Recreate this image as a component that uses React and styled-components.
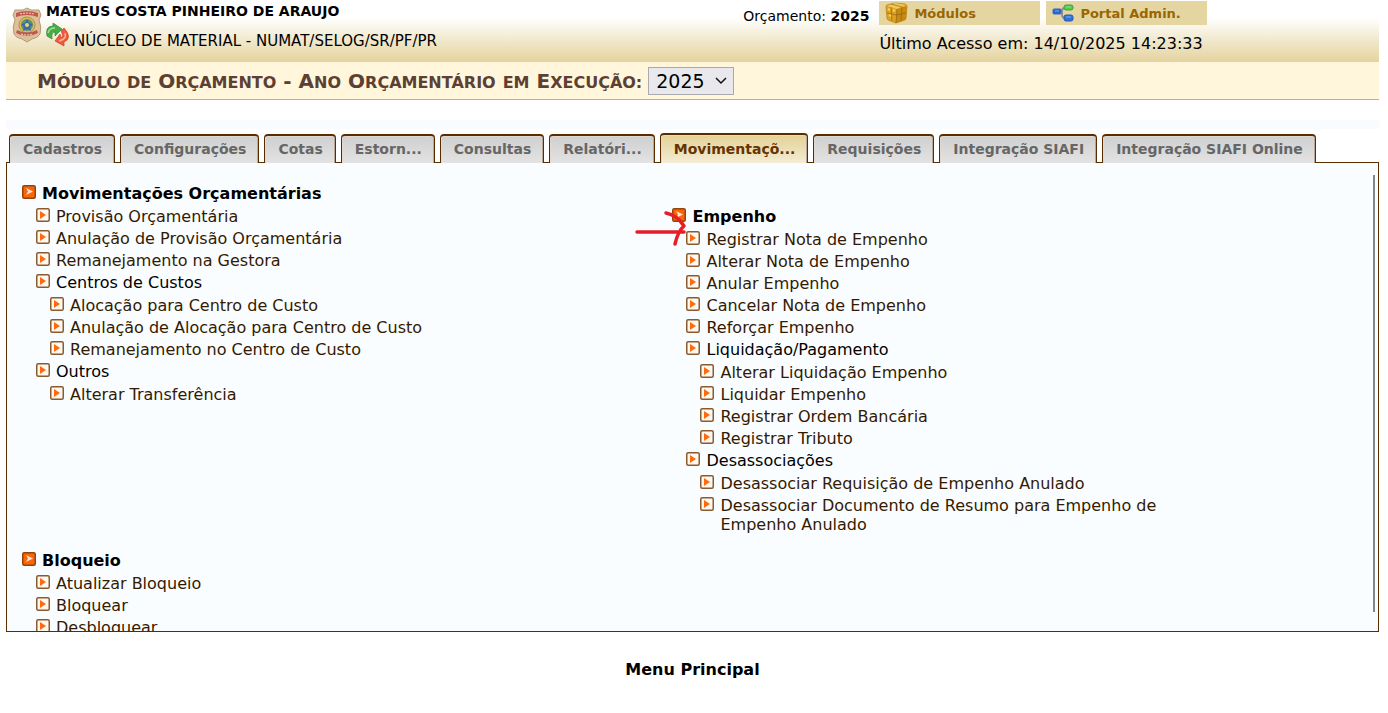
import React from "react";
import styled, { createGlobalStyle, css } from "styled-components";

const GlobalStyle = createGlobalStyle`
  * { box-sizing: border-box; }
  body {
    margin: 0;
    background: #fff;
    color: #000;
    font-family: "DejaVu Sans", Verdana, sans-serif;
    font-size: 16px;
    line-height: 19px;
  }
  ul { list-style: none; margin: 0; padding: 0; }
  a { text-decoration: none; color: inherit; }
`;

const Page = styled.div`
  padding: 0 9px 0 6px;
`;

const Header = styled.header`
  display: flex;
  justify-content: space-between;
  height: 62px;
  padding: 1px 12.5% 0 6px;
  background: linear-gradient(#fff 28%, #e4d39e);
`;

const UserArea = styled.div`
  display: flex;
  gap: 4px;
`;

const Crest = styled.svg`
  width: 30px;
  height: 36px;
  margin-top: 6px;
`;

const UserName = styled.strong`
  display: block;
  font-size: 14px;
  line-height: 20px;
`;

const Unit = styled.div`
  display: flex;
  align-items: flex-start;
  gap: 4px;
  font-size: 15px;
`;

const UnitName = styled.span`
  padding-top: 11px;
`;

const SwitchButton = styled.button`
  display: flex;
  padding: 2px 0 0;
  border: 0;
  background: none;
`;

const AccessArea = styled.div`
  display: grid;
  grid-template-columns: auto auto;
  column-gap: 10px;
  align-content: start;
`;

const Budget = styled.div`
  font-size: 14px;
  line-height: 30px;
`;

const Shortcuts = styled.nav`
  display: flex;
  gap: 6px;
`;

const Shortcut = styled.a`
  display: flex;
  align-items: center;
  gap: 6px;
  width: 161px;
  height: 24px;
  padding-left: 6px;
  background: #e4d5a1;
  color: #996600;
  font-size: 13px;
  font-weight: bold;
`;

const LastAccess = styled.div`
  grid-column: 2;
  line-height: 26px;
`;

const TitleBar = styled.div`
  display: flex;
  align-items: center;
  gap: 6px;
  height: 38px;
  padding-left: 31px;
  background: #fff6db;
  border-bottom: 1px solid #d1b44a;
`;

const Title = styled.label`
  padding-top: 2px;
  color: #5c4033;
  font-size: 16px;
  font-weight: bold;
  line-height: 24px;
  text-transform: uppercase;
`;

const Capital = styled.span`
  font-size: 20px;
`;

const YearField = styled.div`
  display: grid;
  align-items: center;
  svg {
    grid-area: 1 / 1;
    justify-self: end;
    margin-right: 7px;
    pointer-events: none;
  }
`;

const YearSelect = styled.select`
  grid-area: 1 / 1;
  appearance: none;
  width: 86px;
  height: 28px;
  padding: 0 7px;
  border: 1px solid #a9a9ae;
  border-radius: 0;
  background: #e9e9ed;
  color: #000;
  font-family: inherit;
  font-size: 19px;
`;

const Strip = styled.div`
  height: 9px;
  margin-top: 20px;
  background: #fafbff;
`;

const Tabs = styled.nav`
  position: relative;
  display: flex;
  align-items: flex-end;
  gap: 5px;
  padding: 4px 3px 0;
  margin-bottom: -1px;
`;

const Tab = styled.a`
  height: 29px;
  padding: 0 12px 0 13px;
  border: 1px solid #5a2d00;
  border-width: 2px 1px 0;
  border-radius: 4px 4px 0 0;
  background: linear-gradient(#cfcfcf, #e3e3e3);
  box-shadow: inset 1px 1px #e0d9d2, inset -1px 0 #b9a797;
  color: #666;
  font-size: 14px;
  font-weight: bold;
  line-height: 26px;
  white-space: nowrap;
  ${(p) =>
    p.$active &&
    css`
      height: 30px;
      line-height: 28px;
      background: linear-gradient(#e3d194, #f4ecd6);
      color: #663300;
    `}
`;

const Panel = styled.main`
  display: flex;
  height: calc(100vh - 243px);
  border: 1px solid #5a2d00;
  background: #fafdff;
  overflow: hidden;
`;

const MenuGrid = styled.div`
  flex: 1;
  display: grid;
  grid-template-columns: 48% 1fr;
  column-gap: 2px;
  align-content: start;
  row-gap: 14px;
  padding: 21px 0 0 15px;
`;

const Section = styled.section`
  position: relative;
  max-width: 500px;
  margin-top: ${(p) => (p.$lowered ? "23px" : "0")};
`;

const Row = styled.div`
  display: flex;
  align-items: flex-start;
  gap: 6px;
  padding-bottom: 3px;
  svg { flex: none; margin-top: 1px; }
`;

const SectionTitle = styled.h2`
  margin: 0;
  font-size: 16px;
  line-height: 19px;
`;

const List = styled.ul`
  && { padding: 1px 0 0 14px; }
`;

const MenuLink = styled.a`
  && { color: #331a00; }
`;

const ScrollThumb = styled.div`
  width: 2px;
  margin: 12px 3px 19px 0;
  background: #868686;
`;

const Footer = styled.footer`
  padding: 28px 0;
  text-align: center;
  font-weight: bold;
`;

const Arrow = styled.svg`
  position: absolute;
  left: -37px;
  top: 3px;
  pointer-events: none;
`;

const CrestIcon = () => (
  <Crest viewBox="0 0 30 36" aria-hidden="true">
    <path d="M15 1 19 3 27 3 29 8 27 13Q30 20 28 27 26 31 20 32L15 35 10 32Q4 31 2 27 0 20 3 13L1 8 3 3 11 3Z" fill="#dcc096" stroke="#b39a7c" />
    <path d="M4 6Q15 2 26 6L26 10Q15 6 4 10Z" fill="#c25650" />
    <circle cx="15" cy="18" r="8" fill="#d8bd55" stroke="#b09050" />
    <circle cx="15" cy="18" r="6" fill="#5f9468" />
    <path d="m15 12 2 4 4 1-3 3 1 4-4-2-4 2 1-4-3-3 4-1Z" fill="#3c68b0" />
    <circle cx="15" cy="18" r="2" fill="#d9dc70" />
    <path d="M4 26Q15 32 26 26L25 23Q15 28 5 23Z" fill="#bd5a50" />
    <path d="M8 7Q15 5 22 7M9 27Q15 29 21 27" fill="none" stroke="#eedccc" strokeDasharray="2 1" />
  </Crest>
);

const SwitchIcon = () => (
  <svg width="24" height="24" viewBox="0 0 24 24" aria-hidden="true">
    <path d="M1 13Q-1 3 7 3V0L16 6 9 13V9Q5 9 6 16Z" fill="#49ad45" stroke="#2d8735" strokeWidth=".7" />
    <path d="M2 10Q3 5 9 5" fill="none" stroke="#a4dda0" strokeWidth="1.500" />
    <path d="M18 5Q27 15 18 19V23L9 18 14 11 15 15Q18 13 15 8Z" fill="#f05a3c" stroke="#cf4028" strokeWidth=".7" />
    <path d="M19 10Q21 16 13 18" fill="none" stroke="#f9b29c" strokeWidth="1.500" />
  </svg>
);

const BoxIcon = () => (
  <svg width="23" height="22" viewBox="0 0 23 22" aria-hidden="true">
    <path d="M1 5Q1 4 2 3L10 1 20 2Q22 3 22 4L21 16Q21 17 20 18L11 21 3 18Q2 17 2 16Z" fill="#dfa21c" stroke="#b58524" strokeWidth=".8" />
    <path d="M2 4 10 1 21 3 12 7Z" fill="#eec85c" />
    <path d="M12 7 22 4 21 17 11 21Z" fill="#c78a10" />
    <path d="M2 11 11 13 21 11M6 5 7 19M12 7 11 21M17 5 16 19M6 2 17 5" fill="none" stroke="#8a6010" strokeWidth=".9" opacity=".7" />
    <path d="M3 7 5 8M8 8 10 9M4 13 6 14" stroke="#ffe28a" strokeWidth="2" opacity=".7" />
  </svg>
);

const NodesIcon = () => (
  <svg width="22" height="18" viewBox="0 0 22 18" aria-hidden="true">
    <path d="M7 8H11M15 4H13Q10 4 10 7V11Q10 14 14 14" fill="none" stroke="#8793a0" strokeWidth="2" />
    <rect x="1" y="5" width="8" height="5" rx="1" fill="#2465d8" stroke="#3a66b8" />
    <rect x="12" y="1" width="9" height="5" rx="2" fill="#4fd03d" stroke="#469c42" />
    <rect x="12" y="11" width="9" height="6" rx="2" fill="#2f70dc" stroke="#2a5bb0" />
    <path d="M3 7H7M14 3H19M14 13H19" stroke="#b8d9ff" opacity=".6" />
  </svg>
);

const Bullet = ({ solid }) => (
  <svg width="14" height="14" viewBox="0 0 14 14" aria-hidden="true">
    <rect x=".75" y=".75" width="12.500" height="12.500" rx="1.500" fill={solid ? "#fb6508" : "#fff8ee"} stroke={solid ? "#93440c" : "#8a5a30"} strokeWidth="1.500" />
    {solid ? (
      <path d="M4 3 11 6.500 4 10 6 6.500Z" fill="#ffe4d4" />
    ) : (
      <path d="M4 3 10 7 4 11Z" fill="#ff6a10" />
    )}
  </svg>
);

const tabs = [
  "Cadastros", "Configurações", "Cotas", "Estorn...", "Consultas", "Relatóri...",
  "Movimentaçõ...", "Requisições", "Integração SIAFI", "Integração SIAFI Online",
];

const sections = [
  {
    title: "Movimentações Orçamentárias",
    items: [
      "Provisão Orçamentária",
      "Anulação de Provisão Orçamentária",
      "Remanejamento na Gestora",
      {
        label: "Centros de Custos",
        items: [
          "Alocação para Centro de Custo",
          "Anulação de Alocação para Centro de Custo",
          "Remanejamento no Centro de Custo",
        ],
      },
      { label: "Outros", items: ["Alterar Transferência"] },
    ],
  },
  {
    title: "Empenho",
    lowered: true,
    marked: true,
    items: [
      "Registrar Nota de Empenho",
      "Alterar Nota de Empenho",
      "Anular Empenho",
      "Cancelar Nota de Empenho",
      "Reforçar Empenho",
      {
        label: "Liquidação/Pagamento",
        items: [
          "Alterar Liquidação Empenho",
          "Liquidar Empenho",
          "Registrar Ordem Bancária",
          "Registrar Tributo",
        ],
      },
      {
        label: "Desassociações",
        items: [
          "Desassociar Requisição de Empenho Anulado",
          "Desassociar Documento de Resumo para Empenho de Empenho Anulado",
        ],
      },
    ],
  },
  { title: "Bloqueio", items: ["Atualizar Bloqueio", "Bloquear", "Desbloquear"] },
];

const MenuList = ({ items }) => (
  <List>
    {items.map((item) =>
      typeof item === "string" ? (
        <li key={item}>
          <Row>
            <Bullet />
            <MenuLink href="#">{item}</MenuLink>
          </Row>
        </li>
      ) : (
        <li key={item.label}>
          <Row>
            <Bullet />
            <span>{item.label}</span>
          </Row>
          <MenuList items={item.items} />
        </li>
      )
    )}
  </List>
);

/* Small caps: capitals and spaces keep the full size, other letters are smaller. */
const SmallCaps = ({ text }) =>
  text.split(/([\p{Lu}\s-]+)/u).map((part, i) =>
    i % 2 ? <Capital key={i}>{part}</Capital> : part
  );

export default function App() {
  return (
    <>
      <GlobalStyle />
      <Page>
        <Header>
          <UserArea>
            <CrestIcon />
            <div>
              <UserName>MATEUS COSTA PINHEIRO DE ARAUJO</UserName>
              <Unit>
                <SwitchButton aria-label="Trocar unidade">
                  <SwitchIcon />
                </SwitchButton>
                <UnitName>NÚCLEO DE MATERIAL - NUMAT/SELOG/SR/PF/PR</UnitName>
              </Unit>
            </div>
          </UserArea>
          <AccessArea>
            <Budget>
              Orçamento: <strong>2025</strong>
            </Budget>
            <Shortcuts>
              <Shortcut href="#"><BoxIcon />Módulos</Shortcut>
              <Shortcut href="#"><NodesIcon />Portal Admin.</Shortcut>
            </Shortcuts>
            <LastAccess>Último Acesso em: 14/10/2025 14:23:33</LastAccess>
          </AccessArea>
        </Header>
        <TitleBar>
          <Title htmlFor="year">
            <SmallCaps text="Módulo de Orçamento - Ano Orçamentário em Execução:" />
          </Title>
          <YearField>
            <YearSelect id="year" defaultValue="2025">
              <option>2025</option>
            </YearSelect>
            <svg width="12" height="8" viewBox="0 0 12 8" aria-hidden="true">
              <path d="M1 1 6 6 11 1" fill="none" stroke="#111" strokeWidth="1.500" />
            </svg>
          </YearField>
        </TitleBar>
        <Strip />
        <Tabs>
          {tabs.map((t) => (
            <Tab key={t} href="#" $active={t === "Movimentaçõ..."}>{t}</Tab>
          ))}
        </Tabs>
        <Panel>
          <MenuGrid>
            {sections.map((s) => (
              <Section key={s.title} $lowered={s.lowered}>
                <Row>
                  <Bullet solid />
                  <SectionTitle>{s.title}</SectionTitle>
                </Row>
                <MenuList items={s.items} />
                {s.marked && (
                  <Arrow width="52" height="38" viewBox="0 0 52 38" aria-hidden="true">
                    <path d="M2 22H49M31 3Q42 5 49 16 43 21 40 34" fill="none" stroke="#e61e25" strokeWidth="3.500" strokeLinecap="round" strokeLinejoin="round" />
                  </Arrow>
                )}
              </Section>
            ))}
          </MenuGrid>
          <ScrollThumb />
        </Panel>
        <Footer>Menu Principal</Footer>
      </Page>
    </>
  );
}
